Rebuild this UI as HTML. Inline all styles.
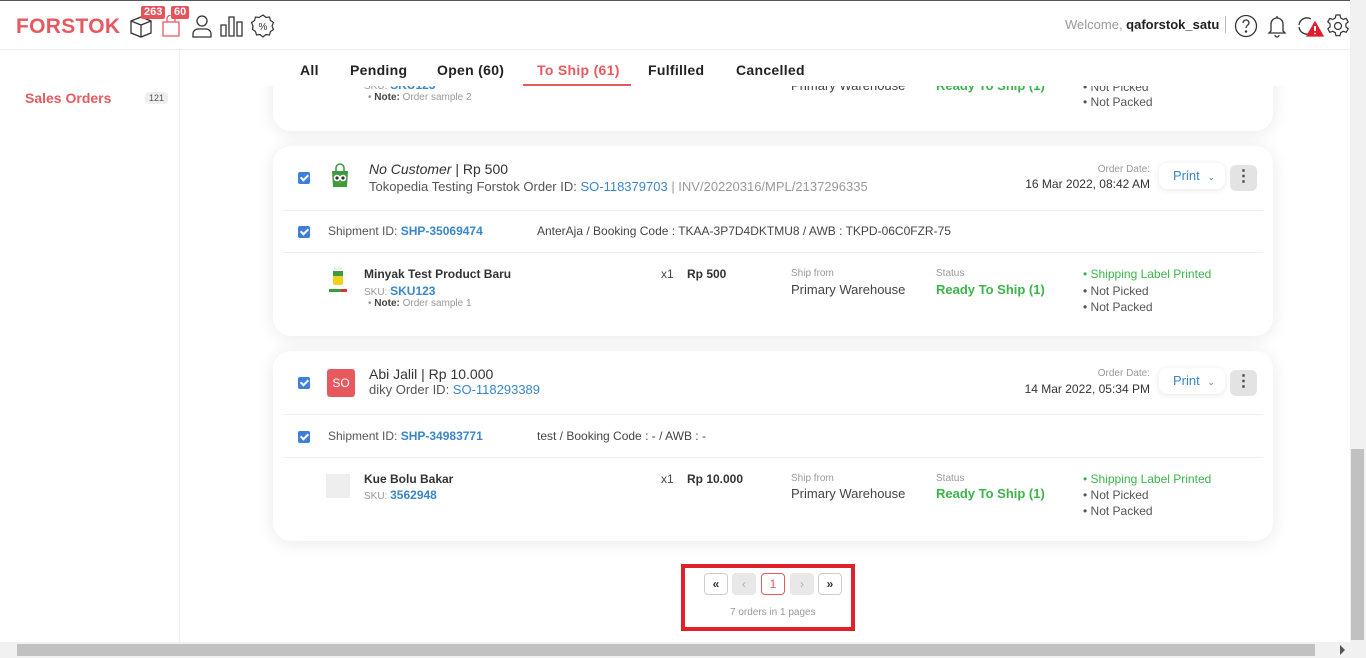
<!DOCTYPE html>
<html><head><meta charset="utf-8"><style>
*{box-sizing:border-box;margin:0;padding:0}
body{width:1366px;height:658px;overflow:hidden;background:#fff;font-family:"Liberation Sans",sans-serif;color:#333;position:relative}
.a{position:absolute;white-space:nowrap}
.top{position:absolute;left:0;top:0;width:1366px;height:50px;background:#fff;border-bottom:1px solid #eee;border-top:1px solid #555;z-index:10}
.logo{left:16px;top:14px;font-size:21px;font-weight:bold;color:#e8585f;letter-spacing:0.3px}
.badge{background:#e8535b;color:#fff;font-size:11px;font-weight:bold;padding:0 3px;border-radius:2px;line-height:13px}
.side{position:absolute;left:0;top:50px;width:180px;height:592px;border-right:1px solid #eee;background:#fff}
.card{position:absolute;left:273px;width:1000px;background:#fff;border-radius:18px;box-shadow:0 2px 18px rgba(0,0,0,.09)}
.tabs{position:absolute;left:180px;top:50px;width:1170px;height:36px;background:#fff;z-index:5}
.tab{position:absolute;top:12px;font-size:14px;font-weight:bold;color:#222;letter-spacing:.3px}
.cb{position:absolute;width:12px;height:12px;background:#3d7fd9;border-radius:2px}
.cb:after{content:"";position:absolute;left:3.5px;top:1px;width:3px;height:6px;border:solid #fff;border-width:0 2px 2px 0;transform:rotate(45deg)}
.blue{color:#3a86c8}
.gray{color:#999}
.green{color:#3bb54a}
.s13{font-size:13px}.s12{font-size:12px}.s10{font-size:10px}
.hr{position:absolute;left:10px;width:980px;height:1px;background:#eee}
.print{position:absolute;width:66px;height:26px;border-radius:8px;box-shadow:0 1px 6px rgba(0,0,0,.1);color:#3a86c8;font-size:13px;padding:5px 0 0 14px}
.dots{position:absolute;width:27px;height:26px;border-radius:6px;background:#e3e3e3;text-align:center;font-size:16px;font-weight:bold;line-height:24px;color:#444}
.pg{position:absolute;top:573px;width:24px;height:22px;border:1px solid #ccc;border-radius:4px;text-align:center;font-size:12px;line-height:20px;background:#fff}
</style></head><body>
<div class="top">
<div class="a logo">FORSTOK</div>
<svg class="a" style="left:129px;top:13px" width="24" height="24" viewBox="0 0 24 24" fill="none" stroke="#333" stroke-width="1.3"><path d="M2 7l10-4 10 4v12l-10 4-10-4z M2 7l10 4 10-4 M12 11v12"/></svg>
<div class="a badge" style="left:141px;top:5px">263</div>
<svg class="a" style="left:161px;top:14px" width="20" height="22" viewBox="0 0 20 22" fill="none" stroke="#e8585f" stroke-width="1.3"><path d="M2 7h16v14H2z M6 7V4a4 4 0 018 0v3"/></svg>
<div class="a badge" style="left:171px;top:5px">60</div>
<svg class="a" style="left:191px;top:13px" width="22" height="24" viewBox="0 0 22 24" fill="none" stroke="#333" stroke-width="1.3"><circle cx="11" cy="7" r="5"/><path d="M2 23v-3a5 5 0 015-5h8a5 5 0 015 5v3z"/></svg>
<svg class="a" style="left:220px;top:14px" width="24" height="22" viewBox="0 0 24 22" fill="none" stroke="#333" stroke-width="1.3"><path d="M1 10h5v11H1z M9 2h5v19H9z M17 7h5v14h-5z"/></svg>
<svg class="a" style="left:251px;top:13px" width="24" height="24" viewBox="0 0 24 24" fill="none" stroke="#333" stroke-width="1.2"><path d="M12 1l3 2.5 3.5-.5 1 3.5 3 2-1.5 3.5 1.5 3.5-3 2-1 3.5-3.5-.5-3 2.5-3-2.5-3.5.5-1-3.5-3-2L2 12 .5 8.5l3-2 1-3.5 3.5.5z"/><text x="12" y="16" font-size="10" text-anchor="middle" fill="#333" stroke="none" font-family="Liberation Sans">%</text></svg>
<div class="a s13" style="left:1065px;top:16px;color:#999">Welcome, <b style="color:#222">qaforstok_satu</b></div>
<div class="a" style="left:1225px;top:15px;width:1px;height:17px;background:#bbb"></div>
<svg class="a" style="left:1234px;top:13px" width="24" height="24" viewBox="0 0 24 24" fill="none" stroke="#333" stroke-width="1.3"><circle cx="12" cy="12" r="10.5"/><path d="M9 9a3 3 0 016 0c0 2-3 2.5-3 5"/><circle cx="12" cy="17.5" r=".6" fill="#333"/></svg>
<svg class="a" style="left:1267px;top:13px" width="20" height="24" viewBox="0 0 20 24" fill="none" stroke="#333" stroke-width="1.3"><path d="M10 2v2 M4 17V10a6 6 0 0112 0v7l2 2H2z M8 21a2 2 0 004 0"/></svg>
<svg class="a" style="left:1297px;top:13px" width="28" height="24" viewBox="0 0 28 24" fill="none" stroke="#333" stroke-width="1.3"><path d="M14 5a8 8 0 00-12 6 M2 13a8 8 0 0012 6"/><path d="M18 8l8 14H10z" fill="#e11c2b" stroke="#e11c2b"/><path d="M18 12v5" stroke="#fff" stroke-width="2"/><circle cx="18" cy="19.5" r=".9" fill="#fff" stroke="none"/></svg>
<svg class="a" style="left:1326px;top:13px" width="24" height="24" viewBox="0 0 24 24" fill="none" stroke="#333" stroke-width="1.2"><circle cx="12" cy="12" r="3.5"/><path d="M10 1h4l.7 3 2.5 1.4 3-1 2 3.4-2.3 2.1v2.9l2.3 2.1-2 3.4-3-1-2.5 1.4-.7 3h-4l-.7-3-2.5-1.4-3 1-2-3.4 2.3-2.1v-2.9L1.8 7.8l2-3.4 3 1 2.5-1.4z"/></svg>
</div>
<div class="side">
<div class="a" style="left:25px;top:40px;font-size:14px;font-weight:bold;color:#e8585f">Sales Orders</div>
<div class="a" style="left:145px;top:42px;font-size:9px;background:#eee;color:#555;padding:1px 4px;border-radius:4px">121</div>
</div>
<div class="tabs">
<div class="tab" style="left:120px">All</div>
<div class="tab" style="left:170px">Pending</div>
<div class="tab" style="left:257px">Open (60)</div>
<div class="tab" style="left:357px;color:#e8585f">To Ship (61)</div>
<div class="a" style="left:343px;top:34px;width:108px;height:2px;background:#e8585f"></div>
<div class="tab" style="left:468px">Fulfilled</div>
<div class="tab" style="left:556px">Cancelled</div>
</div>

<div class="card" style="top:30px;height:101px">
<div class="a s10 gray" style="left:91px;top:48px">SKU: <span class="blue s12" style="font-weight:bold">SKU123</span></div>
<div class="a s10 gray" style="left:95px;top:62px">• <b style="color:#444">Note:</b> Order sample 2</div>
<div class="a s13" style="left:518px;top:48px;color:#444">Primary Warehouse</div>
<div class="a s13 green" style="left:663px;top:48px;font-weight:bold">Ready To Ship (1)</div>
<div class="a s12" style="left:810px;top:50px;color:#555">• Not Picked</div>
<div class="a s12" style="left:810px;top:65px;color:#555">• Not Packed</div>
</div>

<!-- card 2 -->
<div class="card" style="top:146px;height:190px">
<div class="cb" style="left:25px;top:26px"></div>
<svg class="a" style="left:55px;top:17px" width="24" height="26" viewBox="0 0 24 26"><path d="M4 8h16l-1 16H5z" fill="#3c9b3c"/><path d="M8 8V5a4 4 0 018 0v3" fill="none" stroke="#3c9b3c" stroke-width="1.6"/><circle cx="9" cy="15" r="3.3" fill="#fff"/><circle cx="15" cy="15" r="3.3" fill="#fff"/><circle cx="9" cy="15" r="1.6" fill="#333"/><circle cx="15" cy="15" r="1.6" fill="#333"/><path d="M11 19l1 1.5 1-1.5z" fill="#f0a020"/></svg>
<div class="a" style="left:96px;top:15px;font-size:14px"><i style="color:#333">No Customer</i> | Rp 500</div>
<div class="a s13" style="left:96px;top:33px;color:#555">Tokopedia Testing Forstok Order ID: <span class="blue">SO-118379703</span> <span class="gray">| INV/20220316/MPL/2137296335</span></div>
<div class="a s10 gray" style="right:123px;top:18px">Order Date:</div>
<div class="a s12" style="right:123px;top:31px;color:#333">16 Mar 2022, 08:42 AM</div>
<div class="print" style="left:886px;top:17px">Print <span style="font-size:9px;margin-left:4px">⌄</span></div>
<div class="dots" style="left:957px;top:19px">⋮</div>
<div class="hr" style="top:64px"></div>
<div class="cb" style="left:25px;top:80px"></div>
<div class="a s12" style="left:55px;top:78px;color:#555">Shipment ID: <span class="blue" style="font-weight:bold">SHP-35069474</span></div>
<div class="a s12" style="left:264px;top:78px;color:#444">AnterAja / Booking Code : TKAA-3P7D4DKTMU8 / AWB : TKPD-06C0FZR-75</div>
<div class="hr" style="top:106px"></div>
<svg class="a" style="left:55px;top:120px" width="20" height="28" viewBox="0 0 20 28"><rect x="6" y="1" width="8" height="3" fill="#eee"/><rect x="5" y="5" width="10" height="14" rx="2" fill="#f0d020"/><rect x="5" y="5" width="10" height="5" fill="#3c9b3c"/><rect x="1" y="23" width="18" height="3" fill="#3c9b3c"/><rect x="13" y="23" width="6" height="3" fill="#e03030"/></svg>
<div class="a s12" style="left:91px;top:121px;font-weight:bold;color:#333">Minyak Test Product Baru</div>
<div class="a s10 gray" style="left:91px;top:138px">SKU: <span class="blue s12" style="font-weight:bold">SKU123</span></div>
<div class="a s10 gray" style="left:95px;top:152px">• <b style="color:#444">Note:</b> Order sample 1</div>
<div class="a s12" style="left:388px;top:121px;color:#444">x1</div>
<div class="a s12" style="left:414px;top:121px;font-weight:bold">Rp 500</div>
<div class="a s10 gray" style="left:518px;top:122px">Ship from</div>
<div class="a s13" style="left:518px;top:136px;color:#444">Primary Warehouse</div>
<div class="a s10 gray" style="left:663px;top:122px">Status</div>
<div class="a s13 green" style="left:663px;top:136px;font-weight:bold">Ready To Ship (1)</div>
<div class="a s12 green" style="left:810px;top:121px">• Shipping Label Printed</div>
<div class="a s12" style="left:810px;top:138px;color:#555">• Not Picked</div>
<div class="a s12" style="left:810px;top:154px;color:#555">• Not Packed</div>
</div>

<!-- card 3 -->
<div class="card" style="top:351px;height:190px">
<div class="cb" style="left:25px;top:26px"></div>
<div class="a" style="left:54px;top:18px;width:28px;height:28px;background:#e8585f;border-radius:3px;color:#fff;font-size:12px;text-align:center;line-height:28px">SO</div>
<div class="a" style="left:96px;top:15px;font-size:14px">Abi Jalil | Rp 10.000</div>
<div class="a s13" style="left:96px;top:31px;color:#555">diky Order ID: <span class="blue">SO-118293389</span></div>
<div class="a s10 gray" style="right:123px;top:17px">Order Date:</div>
<div class="a s12" style="right:123px;top:31px;color:#333">14 Mar 2022, 05:34 PM</div>
<div class="print" style="left:886px;top:17px">Print <span style="font-size:9px;margin-left:4px">⌄</span></div>
<div class="dots" style="left:957px;top:19px">⋮</div>
<div class="hr" style="top:63px"></div>
<div class="cb" style="left:25px;top:80px"></div>
<div class="a s12" style="left:55px;top:78px;color:#555">Shipment ID: <span class="blue" style="font-weight:bold">SHP-34983771</span></div>
<div class="a s12" style="left:264px;top:78px;color:#444">test / Booking Code : - / AWB : -</div>
<div class="hr" style="top:106px"></div>
<div class="a" style="left:53px;top:123px;width:24px;height:24px;background:#eee"></div>
<div class="a s12" style="left:91px;top:121px;font-weight:bold;color:#333">Kue Bolu Bakar</div>
<div class="a s10 gray" style="left:91px;top:137px">SKU: <span class="blue s12" style="font-weight:bold">3562948</span></div>
<div class="a s12" style="left:388px;top:121px;color:#444">x1</div>
<div class="a s12" style="left:414px;top:121px;font-weight:bold">Rp 10.000</div>
<div class="a s10 gray" style="left:518px;top:122px">Ship from</div>
<div class="a s13" style="left:518px;top:135px;color:#444">Primary Warehouse</div>
<div class="a s10 gray" style="left:663px;top:122px">Status</div>
<div class="a s13 green" style="left:663px;top:135px;font-weight:bold">Ready To Ship (1)</div>
<div class="a s12 green" style="left:810px;top:121px">• Shipping Label Printed</div>
<div class="a s12" style="left:810px;top:137px;color:#555">• Not Picked</div>
<div class="a s12" style="left:810px;top:153px;color:#555">• Not Packed</div>
</div>

<div class="pg" style="left:704px;font-weight:bold">«</div>
<div class="pg" style="left:732px;background:#e8e8e8;border-color:#e8e8e8;color:#aaa">‹</div>
<div class="pg" style="left:761px;border-color:#e8585f;color:#e8585f">1</div>
<div class="pg" style="left:790px;background:#e8e8e8;border-color:#e8e8e8;color:#aaa">›</div>
<div class="pg" style="left:818px;font-weight:bold">»</div>
<div class="a s10 gray" style="left:730px;top:607px">7 orders in 1 pages</div>
<div class="a" style="left:681px;top:564px;width:174px;height:67px;border:4px solid #e0202b"></div>

<div class="a" style="left:1350px;top:0;width:16px;height:642px;background:#f1f1f1;z-index:20"></div>
<div class="a" style="left:1351px;top:449px;width:13px;height:191px;background:#c1c1c1;z-index:21"></div>
<div class="a" style="left:0;top:642px;width:1366px;height:16px;background:#f1f1f1;z-index:20"></div>
<div class="a" style="left:17px;top:644px;width:1298px;height:12px;background:#c1c1c1;z-index:21"></div>
<div class="a" style="left:1340px;top:645px;width:0;height:0;border-left:5px solid #555;border-top:5px solid transparent;border-bottom:5px solid transparent;z-index:21"></div>
</body></html>
